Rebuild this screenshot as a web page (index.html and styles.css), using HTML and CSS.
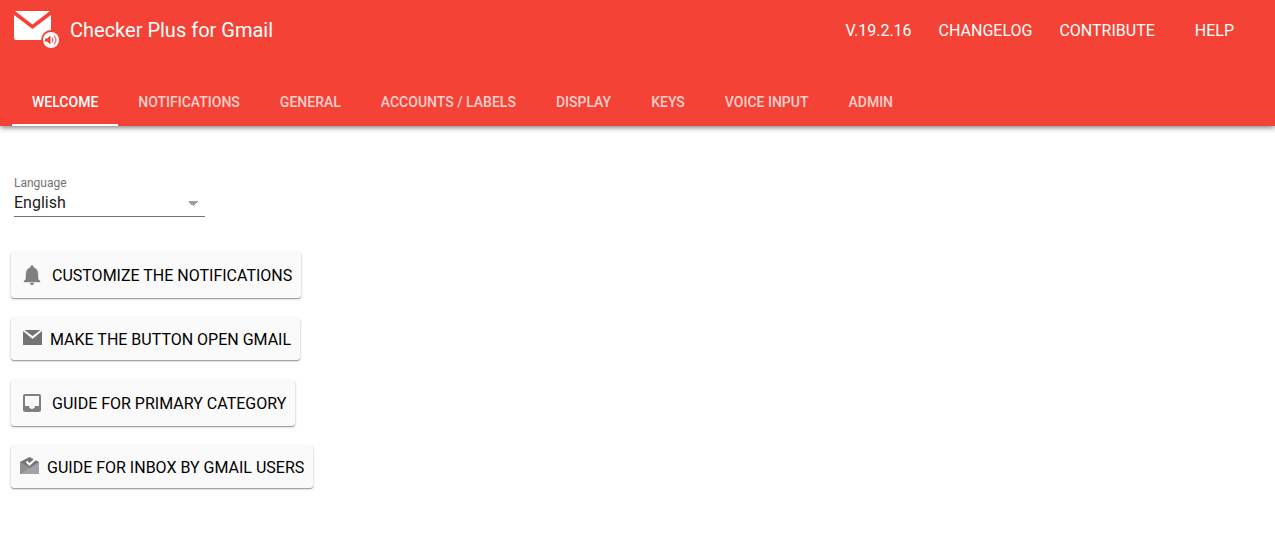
FILE: index.html
```html
<!DOCTYPE html>
<html lang="en">
<head>
  <meta charset="UTF-8" />
  <meta name="viewport" content="width=device-width, initial-scale=1.0" />
  <title>Checker Plus for Gmail</title>
  <link rel="stylesheet" href="styles.css">
</head>
<body>

  <header class="header">
    <div class="toolbar">
      <svg class="logo" viewBox="0 0 48 40" aria-hidden="true">
        <path fill="#fff" d="M1 1h35L18.500 14.500z" />
        <path fill="#fff" d="M0 5l18.500 14L37 5v25H2q-2 0-2-2z" />
        <circle cx="37" cy="30" r="10" fill="#f44336" />
        <circle cx="37" cy="30" r="8" fill="#fff" />
        <path fill="#f44336" d="M31 28.500h2l3.500-3v9l-3.500-3h-2z" />
        <path fill="none" stroke="#f44336" d="M38 27.500q2 2.500 0 5M40 25.500q4 4.500 0 9" />
      </svg>
      <h1 class="title">Checker Plus for Gmail</h1>
      <nav class="links" aria-label="About">
        <a href="#version">V.19.2.16</a>
        <a href="#changelog">CHANGELOG</a>
        <a href="#contribute">CONTRIBUTE</a>
        <a href="#help" class="help">HELP</a>
      </nav>
    </div>
    <nav class="tabs" aria-label="Options">
      <a href="#welcome" class="tab selected" aria-current="page">WELCOME</a>
      <a href="#notifications" class="tab">NOTIFICATIONS</a>
      <a href="#general" class="tab">GENERAL</a>
      <a href="#accounts" class="tab">ACCOUNTS / LABELS</a>
      <a href="#display" class="tab">DISPLAY</a>
      <a href="#keys" class="tab">KEYS</a>
      <a href="#voice" class="tab">VOICE INPUT</a>
      <a href="#admin" class="tab">ADMIN</a>
    </nav>
  </header>

  <main class="page" id="welcome">
    <div class="field">
      <label for="language">Language</label>
      <select id="language">
        <option selected>English</option>
      </select>
    </div>

    <div class="guides">
      <button type="button" class="guide">
        <svg class="icon" viewBox="0 0 24 24" aria-hidden="true">
          <path d="M10 20h4q-.5 2-2 2t-2-2zM18 16v-5c0-3.300-1.800-5.800-4.500-6.500V4c0-.830-.670-1.500-1.500-1.500s-1.500.670-1.500 1.500v.5C7.800 5.200 6 7.700 6 11v5l-2 2v1h16v-1z" stroke="#808080" stroke-width=".4" />
        </svg>
        CUSTOMIZE THE NOTIFICATIONS
      </button>

      <button type="button" class="guide short">
        <svg class="icon mail" viewBox="0 0 19 19" aria-hidden="true">
          <path d="M1.500 1h16l-8 6zM0 2l9.500 8L19 2v14H0z" />
        </svg>
        MAKE THE BUTTON OPEN GMAIL
      </button>

      <button type="button" class="guide">
        <svg class="icon" viewBox="0 0 24 24" aria-hidden="true">
          <path d="M19 3H5c-1.100 0-2 .9-2 2v14c0 1.100.9 2 2 2h14c1.100 0 2-.9 2-2V5c0-1.100-.9-2-2-2zm0 12h-4c0 1.660-1.350 3-3 3s-3-1.340-3-3H5V5h14v10z" />
        </svg>
        GUIDE FOR PRIMARY CATEGORY
      </button>

      <button type="button" class="guide short">
        <svg class="icon inbox" viewBox="0 0 19 19" aria-hidden="true">
          <path fill="#757575" d="M0 5l9.500-5L19 5v6H0z" />
          <path fill="#a3a3a3" d="M0 5l9.500 6L19 5v12H0z" />
          <path fill="#8f8f8f" d="M0 5l9.500 6L0 17z" />
          <path fill="none" stroke="#fff" stroke-width="2" d="M6.500 4.500l3 3 6-5.500" />
        </svg>
        GUIDE FOR INBOX BY GMAIL USERS
      </button>
    </div>
  </main>

</body>
</html>
```
FILE: styles.css
```css
body {
  margin: 0;
  font-family: Roboto, sans-serif;
  font-size: 16px;
  color: #212121;
  background: #fff;
}

/* Header */
.header {
  background: #f44336;
  color: #fff;
  box-shadow: 0 1px 6px rgba(0, 0, 0, 0.6);
}
.toolbar {
  display: flex;
  align-items: center;
  height: 60px;
  padding: 0 41px 0 14px;
}
.logo {
  width: 48px;
  height: 40px;
}
.title {
  margin: 0 0 0 8px;
  font-size: 20px;
  font-weight: 400;
}
.links {
  display: flex;
  gap: 27px;
  margin-left: auto;
}
.links a {
  color: inherit;
  text-decoration: none;
}
.links .help {
  margin-left: 13px;
}
.tabs {
  display: flex;
  padding: 18px 12px 0;
}
.tab {
  box-sizing: border-box;
  height: 48px;
  padding: 0 20px;
  border-bottom: 2px solid transparent;
  color: rgba(255, 255, 255, 0.75);
  font-size: 14px;
  font-weight: 500;
  line-height: 48px;
  text-decoration: none;
}
.tab.selected {
  border-color: #fff;
  color: #fff;
}

/* Welcome page */
.page {
  padding: 49px 11px 32px;
}
.field {
  display: flex;
  flex-direction: column;
  width: 191px;
  margin-left: 3px;
}
.field label {
  color: #737373;
  font-size: 12px;
  line-height: 16px;
}
.field select {
  height: 26px;
  padding: 0 0 2px;
  border: 0;
  border-bottom: 1px solid #737373;
  border-radius: 0;
  appearance: none;
  background: linear-gradient(to top right, transparent 50%, #9e9e9e 0) right 12px center / 5px 5px no-repeat,
    linear-gradient(to top left, transparent 50%, #9e9e9e 0) right 7px center / 5px 5px no-repeat;
  color: inherit;
  font: inherit;
}
.guides {
  display: flex;
  flex-direction: column;
  align-items: flex-start;
  gap: 20px;
  margin-top: 35px;
}
.guide {
  display: flex;
  align-items: center;
  gap: 8px;
  min-height: 46px;
  padding: 0 9px;
  border: 0;
  border-radius: 3px;
  background: #fafafa;
  box-shadow: 0 1px 3px rgba(0, 0, 0, 0.2), 0 1px 1px rgba(0, 0, 0, 0.3);
  color: #000;
  font: inherit;
  cursor: pointer;
}
.guide.short {
  min-height: 42px;
}
.icon {
  width: 24px;
  height: 24px;
  fill: #808080;
}
.icon.mail,
.icon.inbox {
  width: 19px;
  height: 19px;
  margin-bottom: 2px;
}
.icon.mail {
  margin-left: 3px;
  fill: #737373;
}
```
